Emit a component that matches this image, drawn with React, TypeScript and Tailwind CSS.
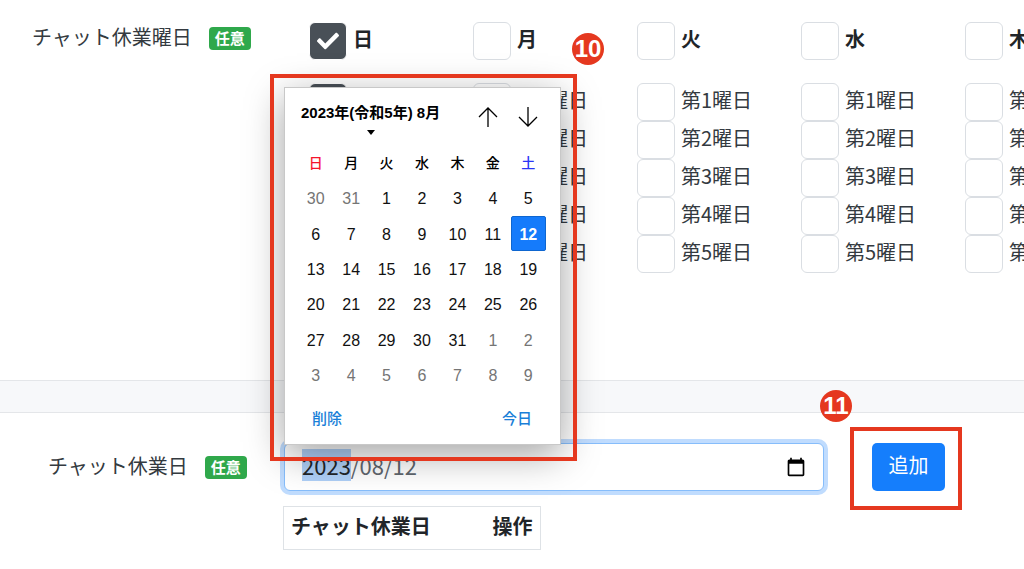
import { useEffect, useRef } from "react";
import clsx from "clsx";
import { FaCheck } from "react-icons/fa";
import { MdCalendarToday } from "react-icons/md";

const weekdays = ["日", "月", "火", "水", "木"];
const ordinals = [1, 2, 3, 4, 5];

const calendarHead = ["日", "月", "火", "水", "木", "金", "土"];
// 6 weeks starting from Sunday, July 30th
const calendarDays = Array.from({ length: 42 }, (_, i) => {
  const n = i - 1;
  if (n < 1) return { day: n + 31, current: false };
  if (n > 31) return { day: n - 31, current: false };
  return { day: n, current: true };
});

function Badge() {
  return (
    <span className="rounded bg-[#2fa84b] px-1.5 pb-0.5 text-[15px] leading-[21px] font-bold text-white">
      任意
    </span>
  );
}

function Check({ label, checked, bold }: { label: string; checked?: boolean; bold?: boolean }) {
  return (
    <label className="flex w-[164px] shrink-0 items-center gap-1.5">
      <span className="relative flex">
        <input
          type="checkbox"
          defaultChecked={checked}
          className="peer size-[38px] appearance-none rounded-md border border-[#dadee3] bg-white checked:border-white checked:bg-[#495057]"
        />
        <FaCheck className="pointer-events-none absolute top-2 left-2 hidden size-[22px] text-white peer-checked:block" />
      </span>
      <span className={clsx("pb-1 whitespace-nowrap", bold ? "font-bold" : "text-[#343a40]")}>{label}</span>
    </label>
  );
}

function Marker({ children, className }: { children: string; className: string }) {
  return (
    <span
      className={clsx(
        "absolute flex size-8 items-center justify-center rounded-full bg-[#e5381f] font-['Liberation_Sans',sans-serif] text-2xl font-bold text-white",
        className
      )}
    >
      {children}
    </span>
  );
}

function Calendar() {
  return (
    <div className="absolute bottom-[46px] left-0 z-10 w-[277px] font-['Liberation_Sans','Noto_Sans_CJK_JP',sans-serif]">
      <div className="border border-[#c8c8c8] bg-white pr-3.5 pl-[13px] text-black shadow-[0_10px_36px_rgba(0,0,0,0.36)]">
        <div className="flex h-[57px] items-start justify-between">
          <button className="flex flex-col items-center pt-3.5 pl-[3px] text-[15px] leading-[22px] font-bold whitespace-nowrap">
            2023年(令和5年) 8月
            <svg className="mt-1.5 h-[5px] w-2" viewBox="0 0 8 5">
              <path d="M0 0h8L4 5z" fill="currentColor" />
            </svg>
          </button>
          <div className="flex gap-5 pt-[19px] pr-2">
            <button aria-label="前の月">
              <svg className="size-5" viewBox="0 0 20 20" fill="none" stroke="currentColor" strokeWidth="1.3">
                <path d="M10 20V1M1 10l9-9 9 9" />
              </svg>
            </button>
            <button aria-label="次の月">
              <svg className="size-5" viewBox="0 0 20 20" fill="none" stroke="currentColor" strokeWidth="1.3">
                <path d="M10 0v19M1 10l9 9 9-9" />
              </svg>
            </button>
          </div>
        </div>
        <div className="grid h-[248px] grid-cols-7 grid-rows-7 text-base">
          {calendarHead.map((d, i) => (
            <span
              key={d}
              className={clsx(
                "flex items-center justify-center text-sm leading-5 font-medium",
                i === 0 && "text-[#f5142d]",
                i === 6 && "text-[#2a35f5]"
              )}
            >
              {d}
            </span>
          ))}
          {calendarDays.map(({ day, current }, i) => (
            <button
              key={i}
              className={clsx(
                "flex items-center justify-center pt-0.5 leading-5",
                current && day === 12
                  ? "rounded-xs border border-[#0e66d0] bg-[#157bfb] font-bold text-white"
                  : current
                    ? "text-[#111]"
                    : "text-[#757575]"
              )}
            >
              {day}
            </button>
          ))}
        </div>
        <div className="flex h-[51px] items-center justify-between px-3.5 text-[15px] font-medium text-[#1a7fd8]">
          <button>削除</button>
          <button>今日</button>
        </div>
      </div>
      <div className="pointer-events-none absolute -top-[13px] -right-4 -bottom-4 -left-3.5 border-4 border-[#e5381f]" />
      <Marker className="-top-[54px] left-[288px]">10</Marker>
    </div>
  );
}

export default function App() {
  const dateRef = useRef<HTMLInputElement>(null);

  // put the selection on the year part, as the date field does on focus
  useEffect(() => {
    dateRef.current?.focus();
    dateRef.current?.setSelectionRange(0, 4);
  }, []);

  return (
    <main className="min-h-screen overflow-hidden bg-white font-['Noto_Sans_CJK_JP',sans-serif] text-xl leading-[30px] font-normal text-[#212529]">
      <section className="flex pt-[22px] pb-[107px]">
        <div className="flex w-[309px] shrink-0 items-start gap-[17px] pl-8">
          <span className="text-[#343a40]">チャット休業曜日</span>
          <div className="flex pt-[5px]">
            <Badge />
          </div>
        </div>
        <div className="min-w-0 flex-1">
          <div className="flex">
            {weekdays.map((d) => (
              <Check key={d} label={d} checked={d === "日"} bold />
            ))}
          </div>
          <div className="mt-[23px]">
            {ordinals.map((n) => (
              <div key={n} className="flex">
                {weekdays.map((d) => (
                  <Check key={d} label={`第${n}曜日`} checked={d === "日"} />
                ))}
              </div>
            ))}
          </div>
        </div>
      </section>

      <div className="h-[33px] border-y border-[#e4e6e9] bg-[#f7f8fa]" />

      <section className="flex pt-[30px] pr-[79px]">
        <div className="flex w-[284px] shrink-0 items-start gap-[17px] pt-2 pl-12">
          <label htmlFor="holiday" className="text-[#343a40]">
            チャット休業日
          </label>
          <div className="flex pt-[5px]">
            <Badge />
          </div>
        </div>
        <div className="min-w-0 flex-1">
          <div className="flex gap-12">
            <div className="relative flex-1">
              <input
                id="holiday"
                ref={dateRef}
                type="text"
                defaultValue="2023/08/12"
                className="h-12 w-full rounded-md border border-[#86bdfb] bg-white px-[17px] pb-1 text-[22px] text-[#5f666d] ring-4 ring-[#c0dcfe] outline-none selection:bg-[#afd0f8] selection:text-[#212529]"
              />
              <button aria-label="カレンダーを開く" className="absolute top-3.5 right-[18px] text-black">
                <MdCalendarToday className="size-5" />
              </button>
              <Calendar />
            </div>
            <div className="relative">
              <button className="h-12 w-[73px] rounded-[5px] bg-[#157efc] pb-1 text-white">追加</button>
              <div className="pointer-events-none absolute -top-4 -right-[17px] -bottom-[19px] -left-[22px] border-4 border-[#e5381f]" />
              <Marker className="-top-[53px] -left-[52px]">11</Marker>
            </div>
          </div>
          <table className="mt-[15px] -ml-px border border-[#dee2e6] text-left">
            <thead>
              <tr>
                <th className="w-[202px] px-[7px] pt-1 pb-2 font-bold">チャット休業日</th>
                <th className="px-[7px] pt-1 pb-2 font-bold">操作</th>
              </tr>
            </thead>
          </table>
        </div>
      </section>
    </main>
  );
}
